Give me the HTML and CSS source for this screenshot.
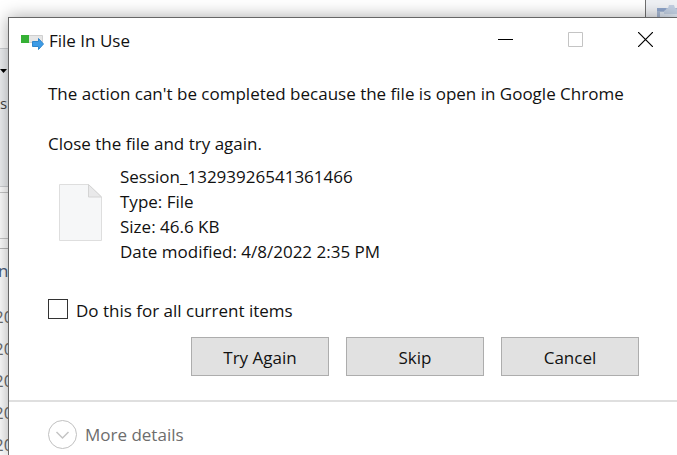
FILE: index.html
```html
<!DOCTYPE html>
<html lang="en">
<head>
<meta charset="utf-8">
<title>File In Use</title>
<link rel="stylesheet" href="styles.css">
</head>
<body>
<div class="desktop">
  <div class="backdrop" aria-hidden="true">
    <div class="explorer">
      <div class="explorer-top"></div>
      <div class="explorer-ribbon">
        <svg class="caret" width="7" height="4" viewBox="0 0 7 4"><path d="M0 0h7L3.500 4z"/></svg>
        <span class="ribbon-text">s</span>
      </div>
      <div class="explorer-gap"></div>
      <div class="explorer-address"></div>
      <div class="explorer-gap-large"></div>
      <div class="explorer-list">
        <span class="list-head">ne</span>
        <span class="list-row">20</span>
        <span class="list-row">20</span>
        <span class="list-row">20</span>
        <span class="list-row">20</span>
        <span class="list-row">20</span>
      </div>
    </div>
    <div class="side-window">
      <svg width="24" height="20" viewBox="0 0 24 20">
        <path d="M0 1h24v19H0z" fill="#a8b9d4"/>
        <path d="M0 1h9v3H0z" fill="#8fa5ca"/>
        <path d="M3 5h21v15H3z" fill="#dde5f0"/>
        <path d="M7 4l4-3 1-3h5l1 3 4 3v3H7z" fill="#c2cfe2"/>
      </svg>
    </div>
  </div>

  <main class="dialog">
    <header class="titlebar">
      <svg class="app-icon" width="23" height="17" viewBox="0 0 23 17" aria-hidden="true">
        <path d="M.5 2.500h21v7H.5z" fill="#e6e6e6" stroke="#cfcfcf"/>
        <path d="M0 2h8v8H0z" fill="#35b035"/>
        <path d="M11.500 8.500h6V5.500l5 5.500-5 5.500v-3h-6z" fill="#3d9be6" stroke="#2f86cc"/>
      </svg>
      <h1 class="title">File In Use</h1>
      <div class="window-controls">
        <button class="control" type="button" aria-label="Minimize">
          <svg width="15" height="15" viewBox="0 0 15 15"><path d="M0 7.500h15" stroke="#000"/></svg>
        </button>
        <button class="control" type="button" aria-label="Maximize" disabled>
          <svg width="15" height="15" viewBox="0 0 15 15"><path d="M.5.5h14v14H.5z" stroke="#c4c4c4" fill="none"/></svg>
        </button>
        <button class="control" type="button" aria-label="Close">
          <svg width="15" height="15" viewBox="0 0 15 15"><path d="M0 0l15 15M15 0L0 15" stroke="#000" stroke-width="1.200"/></svg>
        </button>
      </div>
    </header>

    <section class="content">
      <p class="message">The action can't be completed because the file is open in Google Chrome</p>
      <p class="message">Close the file and try again.</p>
      <div class="file">
        <svg class="file-icon" width="43" height="57" viewBox="0 0 43 57" aria-hidden="true">
          <path d="M.5.5h29l13 12.500v43.500H.5z" fill="#f6f7f8" stroke="#dedede"/>
          <path d="M29.500.5v12.500h13z" fill="#e9e9ea" stroke="#d4d4d4"/>
        </svg>
        <ul class="file-info">
          <li>Session_13293926541361466</li>
          <li>Type: File</li>
          <li>Size: 46.6 KB</li>
          <li>Date modified: 4/8/2022 2:35 PM</li>
        </ul>
      </div>
      <label class="apply-all"><input class="checkbox" type="checkbox">Do this for all current items</label>
      <div class="actions">
        <button class="button" type="button">Try Again</button>
        <button class="button" type="button">Skip</button>
        <button class="button" type="button">Cancel</button>
      </div>
    </section>

    <footer class="footer">
      <button class="details" type="button">
        <svg width="29" height="29" viewBox="0 0 29 29" fill="none" aria-hidden="true">
          <circle cx="14.500" cy="14.500" r="14" stroke="#c0c0c0"/>
          <path d="M8.500 12l6 6 6-6" stroke="#c4c4c4" stroke-width="1.500"/>
        </svg>
        More details
      </button>
    </footer>
  </main>
</div>
</body>
</html>
```
FILE: styles.css
```css
* {
  box-sizing: border-box;
}

body {
  margin: 0;
  font-family: "Open Sans", "Noto Sans", sans-serif;
  font-size: 17px;
  line-height: 25px;
  color: #111;
}

button {
  font: inherit;
  color: inherit;
}

.desktop {
  display: grid;
  height: 100vh;
  overflow: hidden;
}

.backdrop,
.dialog {
  grid-area: 1 / 1;
  min-width: 0;
  min-height: 0;
}

.backdrop {
  display: flex;
  overflow: hidden;
}

.explorer {
  flex: 1;
  background: #fff;
  border-right: 1px solid #707070;
}

.explorer-top {
  height: 48px;
}

.explorer-ribbon {
  display: flex;
  flex-direction: column;
  gap: 20px;
  height: 139px;
  padding-top: 20px;
  background: #eff1f3;
  border: solid #cfd1d4;
  border-width: 1px 0;
}

.caret {
  flex: none;
}

.ribbon-text {
  font-size: 15px;
  line-height: 20px;
  color: #444;
}

.explorer-gap {
  height: 5px;
}

.explorer-address {
  height: 47px;
  border: solid #c8c8c8;
  border-width: 1px 0;
}

.explorer-gap-large {
  height: 9px;
}

.explorer-list {
  display: flex;
  flex-direction: column;
  border-top: 1px solid #b8b8b8;
  line-height: 32px;
  color: #6d6d6d;
}

.list-head {
  padding: 6px 0 14px;
  margin-left: -2px;
  color: #4c607a;
}

.list-row {
  margin-left: -6px;
}

.side-window {
  width: 31px;
  padding: 7px 0 0 11px;
  overflow: hidden;
  background: #eff1f5;
}

.side-window svg {
  overflow: visible;
}

.dialog {
  display: flex;
  flex-direction: column;
  margin: 17px 0 0 8px;
  background: #fff;
  border: solid #666;
  border-width: 1px 0 0 1px;
  box-shadow: 0 0 16px rgba(0, 0, 0, 0.35);
}

.titlebar {
  display: flex;
  align-items: flex-start;
  height: 45px;
  padding-left: 12px;
}

.app-icon {
  margin-top: 15px;
}

.title {
  flex: 1;
  margin: 0 0 0 5px;
  font-size: 17px;
  font-weight: 400;
  line-height: 45px;
}

.window-controls {
  display: flex;
  margin-right: -3px;
}

.control {
  display: grid;
  place-items: center;
  width: 70px;
  height: 43px;
  padding: 0;
  border: 0;
  background: none;
}

.content {
  padding: 18px 38px 24px 39px;
}

.message {
  margin: 0 0 25px;
  white-space: nowrap;
}

.message + .message {
  margin-bottom: 8px;
}

.file {
  display: flex;
  gap: 18px;
  padding-left: 11px;
}

.file-icon {
  flex: none;
  margin-top: 20px;
}

.file-info {
  margin: 0;
  padding: 0;
  list-style: none;
}

.apply-all {
  display: flex;
  align-items: flex-start;
  gap: 8px;
  margin-top: 34px;
}

.checkbox {
  appearance: none;
  width: 20px;
  height: 20px;
  margin: 1px 0 0;
  border: 1px solid #333;
  background: #fff;
}

.checkbox:checked {
  box-shadow: inset 0 0 0 4px #fff;
  background: #333;
}

.actions {
  display: flex;
  justify-content: flex-end;
  gap: 17px;
  margin-top: 14px;
}

.button {
  width: 138px;
  height: 39px;
  padding: 2px 0 0;
  border: 1px solid #adadad;
  background: #e1e1e1;
}

.footer {
  flex: 1;
  padding: 18px 39px 0;
  border-top: 2px solid #dfdfdf;
}

.details {
  display: flex;
  align-items: center;
  gap: 8px;
  padding: 0;
  border: 0;
  background: none;
  color: #6d6d6d;
}
```
